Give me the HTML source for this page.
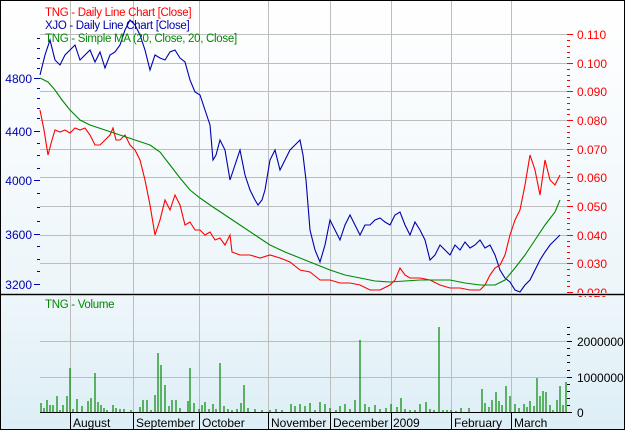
<!DOCTYPE html><html><head><style>body{margin:0}svg{display:block;font-family:"Liberation Sans",sans-serif}</style></head><body>
<svg width="625" height="430" xmlns="http://www.w3.org/2000/svg">
<defs><linearGradient id="g" x1="0" y1="0" x2="0" y2="1"><stop offset="0" stop-color="#ffffff"/><stop offset="1" stop-color="#e4f1f8"/></linearGradient>
<linearGradient id="g2" x1="0" y1="0" x2="0" y2="1"><stop offset="0" stop-color="#eef6fa"/><stop offset="1" stop-color="#ddeef6"/></linearGradient></defs>
<rect x="0" y="0" width="625" height="430" fill="url(#g)"/>
<rect x="0" y="295" width="625" height="135" fill="url(#g2)"/>
<g stroke="#bdbdbd" stroke-width="1">
<path d="M40 34.5H568M40 63.5H568M40 91.5H568M40 120.5H568M40 149.5H568M40 177.5H568M40 206.5H568M40 235.5H568M40 263.5H568"/>
<path d="M70.5 0V293M133.5 0V293M199.5 0V293M268.5 0V293M330.5 0V293M391.5 0V293M451.5 0V293M511.5 0V293"/>
<path d="M40 341.5H568M40 377.5H568"/>
<path d="M70.5 296V412M133.5 296V412M199.5 296V412M268.5 296V412M330.5 296V412M391.5 296V412M451.5 296V412M511.5 296V412"/>
</g>
<g fill="none" stroke-width="1.1">
<polyline stroke="#00a" points="40,75 45,55 50,40 55,60 60,65 65,55 70,50 75,45 80,60 85,55 90,50 95,62 100,52 105,68 110,55 115,52 120,45 125,30 130,20 135,25 140,35 145,50 150,70 155,55 160,58 165,60 170,52 175,50 180,58 185,62 190,80 195,92 200,95 205,110 210,125 213,160 216,155 220,140 225,150 230,180 235,165 240,150 245,175 250,190 255,200 258,205 262,200 265,190 270,160 275,150 280,170 285,160 290,150 295,145 300,140 303,155 306,180 310,230 315,250 320,262 325,245 330,220 335,230 340,240 345,225 350,215 355,225 360,235 365,225 370,225 375,220 380,218 385,222 390,225 395,215 400,212 405,225 410,235 415,222 420,230 425,240 430,260 435,255 440,245 445,250 450,255 455,245 460,250 465,242 470,248 475,245 480,240 485,248 490,245 495,255 500,270 505,278 510,282 515,290 520,292 525,285 530,280 535,270 540,260 545,252 550,245 555,240 560,235"/>
<polyline stroke="#f00" points="40,110 44,130 48,155 52,140 55,130 60,132 65,130 70,133 75,128 80,130 85,128 90,135 95,145 100,145 105,140 110,135 113,128 116,140 120,140 125,135 130,145 135,150 140,160 145,180 150,205 155,235 160,220 165,200 170,210 175,195 180,205 185,225 190,222 195,230 200,230 205,235 210,232 215,240 220,238 225,245 230,235 232,252 240,255 250,255 260,258 270,255 280,258 290,262 300,270 310,272 320,280 330,280 340,283 350,283 360,285 370,290 380,290 390,285 395,280 400,268 405,275 410,278 420,278 430,280 440,285 450,288 460,288 470,290 480,290 485,285 490,275 495,268 500,265 505,255 510,235 515,220 520,210 525,185 530,155 535,170 540,195 545,160 550,180 555,185 560,175"/>
<polyline stroke="#080" points="40,78 48,82 55,90 62,100 70,110 80,120 90,125 105,130 120,135 135,140 150,145 160,152 170,165 180,178 190,190 200,198 210,205 225,215 240,225 255,235 270,245 285,252 300,258 315,264 330,270 345,275 360,278 375,281 390,282 405,281 420,280 435,280 450,280 465,283 480,285 495,285 505,280 515,268 525,255 535,240 545,225 555,212 560,200"/>
</g>
<g stroke="#080" stroke-width="1.2">
<path d="M41 412V403M44 412V408M47 412V400M50 412V405M53 412V405M57 412V396M60 412V410M63 412V405M67 412V396M70 412V368M73 412V409M77 412V399M82 412V406M88 412V401M91 412V398M95 412V373M98 412V402M101 412V405M104 412V408M107 412V410M113 412V405M116 412V408M120 412V409M124 412V409M131 412V410M140 412V407M143 412V400M147 412V400M151 412V410M155 412V395M158 412V353M161 412V365M165 412V385M169 412V406M172 412V400M176 412V400M180 412V408M188 412V401M190 412V368M194 412V403M199 412V409M202 412V405M205 412V402M209 412V409M213 412V404M216 412V409M220 412V363M224 412V406M228 412V409M232 412V410M237 412V409M241 412V403M244 412V385M248 412V408M255 412V409M262 412V410M270 412V410M276 412V409M282 412V410M291 412V404M295 412V406M300 412V404M305 412V406M310 412V403M315 412V410M320 412V402M325 412V404M330 412V408M336 412V410M340 412V406M345 412V404M350 412V409M355 412V400M360 412V340M365 412V404M369 412V407M375 412V405M380 412V409M386 412V408M391 412V404M397 412V407M401 412V398M405 412V409M410 412V410M415 412V410M420 412V404M426 412V402M430 412V409M434 412V410M439 412V327M443 412V410M447 412V410M451 412V410M456 412V411M461 412V408M469 412V408M482 412V389M485 412V403M489 412V407M492 412V400M496 412V392M499 412V401M502 412V405M506 412V386M510 412V396M515 412V404M519 412V408M524 412V404M527 412V407M530 412V401M534 412V406M537 412V378M540 412V396M543 412V391M546 412V392M550 412V405M553 412V410M557 412V400M560 412V386M563 412V405M566 412V382"/>
</g>
<path d="M40 412.5H568" stroke="#000"/>
<g fill="#00a" font-size="12" text-anchor="end">
<text x="32" y="83">4800</text><text x="32" y="136">4400</text><text x="32" y="185">4000</text><text x="32" y="239">3600</text><text x="32" y="289">3200</text>
</g>
<g stroke="#00a"><path d="M34 78.5H40M34 131.5H40M34 180.5H40M34 234.5H40M34 284.5H40M37 38.5H40M37 48.5H40M37 58.5H40M37 68.5H40M37 88.5H40M37 98.5H40M37 108.5H40M37 118.5H40M37 143.5H40M37 155.5H40M37 168.5H40M37 193.5H40M37 207.5H40M37 221.5H40M37 246.5H40M37 259.5H40M37 271.5H40"/></g>
<g fill="#f00" font-size="12">
<text x="577" y="39">0.110</text><text x="577" y="68">0.100</text><text x="577" y="96">0.090</text><text x="577" y="125">0.080</text><text x="577" y="154">0.070</text><text x="577" y="182">0.060</text><text x="577" y="211">0.050</text><text x="577" y="240">0.040</text><text x="577" y="268">0.030</text><text x="577" y="297">0.020</text>
</g>
<g stroke="#f00"><path d="M567 34.5H573M567 63.5H573M567 91.5H573M567 120.5H573M567 149.5H573M567 177.5H573M567 206.5H573M567 235.5H573M567 263.5H573M567 292.5H573"/>
<path d="M567 40.5H570M567 46.5H570M567 52.5H570M567 57.5H570M567 69.5H570M567 75.5H570M567 80.5H570M567 86.5H570M567 97.5H570M567 103.5H570M567 109.5H570M567 114.5H570M567 126.5H570M567 132.5H570M567 137.5H570M567 143.5H570M567 155.5H570M567 160.5H570M567 166.5H570M567 172.5H570M567 183.5H570M567 189.5H570M567 195.5H570M567 200.5H570M567 212.5H570M567 218.5H570M567 223.5H570M567 229.5H570M567 241.5H570M567 246.5H570M567 252.5H570M567 258.5H570M567 269.5H570M567 275.5H570M567 281.5H570M567 286.5H570"/></g>
<rect x="0" y="293" width="625" height="3" fill="#fff"/>
<path d="M0 294.5H625" stroke="#000" stroke-width="1.5"/>
<g stroke="#000"><path d="M567 341.5H572M567 377.5H572M567 412.5H572M567 334.5H570M567 348.5H570M567 355.5H570M567 362.5H570M567 370.5H570M567 384.5H570M567 391.5H570M567 398.5H570M567 405.5H570M567 327.5H570"/></g>
<g fill="#000" font-size="12"><text x="577" y="346">2000000</text><text x="577" y="382">1000000</text><text x="577" y="417">0</text></g>
<g stroke="#000"><path d="M70.5 413V430M133.5 413V430M199.5 413V430M268.5 413V430M330.5 413V430M391.5 413V430M451.5 413V430M511.5 413V430"/></g>
<g fill="#000" font-size="12"><text x="73" y="427">August</text><text x="136" y="427">September</text><text x="202" y="427">October</text><text x="271" y="427">November</text><text x="333" y="427">December</text><text x="393" y="427">2009</text><text x="454" y="427">February</text><text x="514" y="427">March</text></g>
<g font-size="11.5" letter-spacing="-0.3"><text x="45" y="16" fill="#f00">TNG - Daily Line Chart [Close]</text><text x="45" y="29" fill="#00a">XJO - Daily Line Chart [Close]</text><text x="45" y="42" fill="#080">TNG - Simple MA (20, Close, 20, Close]</text><text x="45" y="308" fill="#080">TNG - Volume</text></g>
<rect x="0.5" y="0.5" width="624" height="429" fill="none" stroke="#000"/>
</svg></body></html>
